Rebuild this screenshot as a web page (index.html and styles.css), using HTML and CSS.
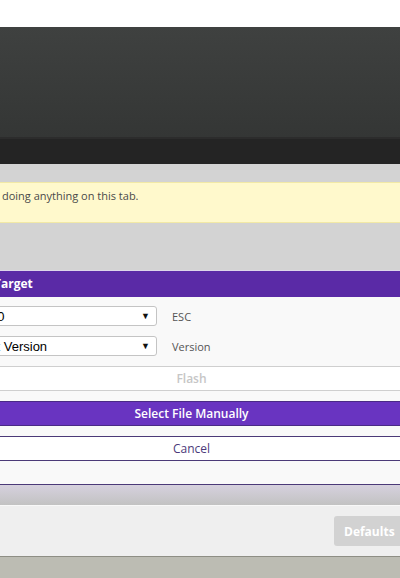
FILE: index.html
```html
<!DOCTYPE html>
<html>
<head>
<meta charset="utf-8">
<link rel="stylesheet" href="styles.css">
</head>
<body>
<div class="page">
  <div class="top-white"></div>
  <header class="hdr"></header>
  <div class="tabbar"></div>
  <main class="content">
    <div class="inner">
      <div class="notice">doing anything on this tab.</div>
      <section class="panel">
        <div class="panel-head">Target</div>
        <div class="panel-body">
          <div class="field">
            <div class="sel"><span class="sel-text first">ESC 0</span><span class="arrow">▼</span></div>
            <span class="lbl">ESC</span>
          </div>
          <div class="field">
            <div class="sel"><span class="sel-text">Select Version</span><span class="arrow">▼</span></div>
            <span class="lbl">Version</span>
          </div>
          <button class="btn flash">Flash</button>
          <button class="btn primary">Select File Manually</button>
          <button class="btn cancel">Cancel</button>
          <div class="spacer"></div>
        </div>
      </section>
    </div>
    <div class="shade"></div>
  </main>
  <footer class="foot">
    <button class="defaults">Defaults</button>
  </footer>
  <div class="bottom"></div>
</div>
</body>
</html>
```
FILE: styles.css
```css
html, body {
  margin: 0;
  padding: 0;
  background: #bcbcb3;
}
.page {
  width: 400px;
  height: 578px;
  overflow: hidden;
  font-family: "Open Sans", "Liberation Sans", sans-serif;
}
.top-white {
  height: 27px;
  background: #ffffff;
}
.hdr {
  height: 110px;
  background: linear-gradient(#3f4140, #343635);
}
.tabbar {
  height: 25px;
  background: #242424;
  border-top: 2px solid #2c2c2c;
}
.content {
  background: #d3d3d3;
}
.inner {
  margin-left: -17px;
  width: 440px;
  padding-top: 18px;
}
.notice {
  box-sizing: border-box;
  height: 41px;
  background: #fff9cc;
  border-top: 1px solid #f2e9a6;
  border-bottom: 1px solid #f2e9a6;
  padding: 5px 0 0 19px;
  font-size: 11px;
  line-height: 16px;
  color: #4a4a4a;
}
.panel {
  margin-top: 47px;
  background: #f9f9f9;
  border-bottom: 1px solid #4b3a78;
}
.panel-head {
  height: 27px;
  box-sizing: border-box;
  background: #5a2aa6;
  border-top: 1px solid #ddd6ea;
  color: #ffffff;
  font-weight: 700;
  font-size: 12px;
  line-height: 26px;
  padding-left: 11px;
}
.panel-body {
  padding-top: 9px;
  display: flex;
  flex-direction: column;
  gap: 10px;
  width: 417px;
}
.field {
  display: flex;
  align-items: center;
  height: 20px;
}
.sel {
  box-sizing: border-box;
  width: 203px;
  height: 20px;
  margin-left: -29px;
  background: #ffffff;
  border: 1px solid #c4c4c4;
  border-radius: 3px;
  display: flex;
  align-items: center;
  justify-content: space-between;
  padding: 0 6px 0 9px;
  font-family: "Liberation Sans", Arial, sans-serif;
  font-size: 13px;
  color: #000;
}
.sel-text.first {
  padding-left: 3px;
}
.arrow {
  font-size: 9px;
  color: #111;
}
.lbl {
  margin-left: 15px;
  font-size: 11px;
  color: #555555;
}
.btn {
  box-sizing: border-box;
  display: block;
  width: 417px;
  height: 25px;
  margin: 0;
  padding: 0;
  font-family: "Open Sans", "Liberation Sans", sans-serif;
  font-size: 12px;
  line-height: 22px;
  text-align: center;
  border-left: none;
  border-right: none;
}
.flash {
  background: #ffffff;
  border-top: 1px solid #cfcfcf;
  border-bottom: 1px solid #cfcfcf;
  color: #c6c6c6;
  font-weight: 600;
}
.primary {
  background: #6934c1;
  border-top: 1px solid #4a2a86;
  border-bottom: 1px solid #4a2a86;
  color: #ffffff;
  font-weight: 600;
}
.cancel {
  background: #ffffff;
  border-top: 1px solid #4b3a78;
  border-bottom: 1px solid #4b3a78;
  color: #4b3a7a;
  font-weight: 400;
}
.spacer {
  height: 13px;
}
.shade {
  height: 20px;
  background: linear-gradient(#d6d1de, #c2c2c2);
}
.foot {
  box-sizing: border-box;
  height: 51px;
  background: #efefef;
  border-top: 1px solid #f8f8f8;
  display: flex;
  justify-content: flex-end;
  align-items: flex-start;
  padding-top: 10px;
}
.defaults {
  box-sizing: border-box;
  height: 30px;
  width: 70px;
  margin-right: -4px;
  border: none;
  border-radius: 3px;
  background: #d2d2d2;
  color: #ffffff;
  font-family: "Open Sans", "Liberation Sans", sans-serif;
  font-weight: 700;
  font-size: 12px;
  padding: 0 10px;
  text-align: left;
}
.bottom {
  height: 22px;
  background: #bcbcb3;
  border-top: 1px solid #8e8e85;
}
```
